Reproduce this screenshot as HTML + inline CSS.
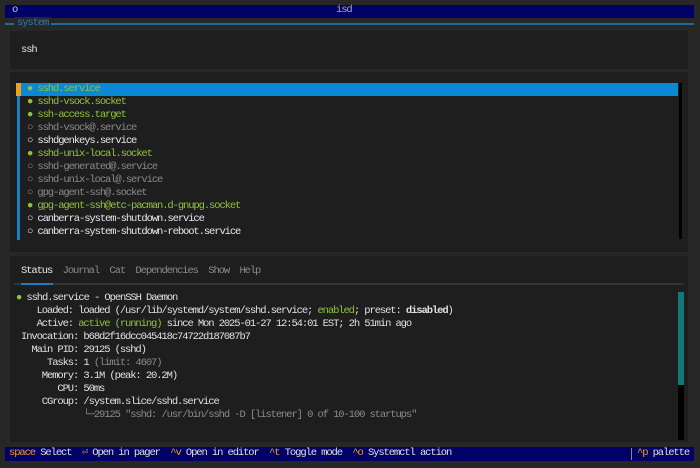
<!DOCTYPE html>
<html><head><style>
body{margin:0;width:700px;height:468px;background:#272727;overflow:hidden;position:relative;font-family:"Liberation Mono",monospace;font-size:10.5px;letter-spacing:-1.1px;color:#e0e0e0}
.a{position:absolute;white-space:pre;line-height:13px}
.g{color:#8fc43a}.d{color:#8a8a8a}.w{color:#e8e8e8}.y{color:#f0a020}
</style></head><body>
<div class="a" style="left:5px;top:5px;width:689px;height:13px;background:#000066"></div>
<div class="a" style="left:12px;top:4px;color:#ccc">o</div>
<div class="a" style="left:336px;top:4px;color:#aaa">isd</div>
<div class="a" style="left:5px;top:23px;width:689px;height:2px;background:#1c6e96"></div>
<div class="a" style="left:14px;top:17px;background:#272727;color:#2a7fa8;padding:0 3px">system</div>
<div class="a" style="left:10px;top:31px;width:678px;height:38px;background:#1e1e1e"></div>
<div class="a" style="left:21px;top:44px">ssh</div>
<div class="a" style="left:10px;top:72px;width:678px;height:180px;background:#1e1e1e"></div>
<div class="a" style="left:17px;top:84px;width:3px;height:156px;background:#1c7fc0"></div>
<div class="a" style="left:17px;top:83px;width:661px;height:13px;background:#0a88d4"></div>
<div class="a" style="left:16px;top:83px;width:5px;height:13px;background:#f0a020"></div>
<div class="a" style="left:679px;top:83px;width:3px;height:156px;background:#000"></div>
<div class="a g" style="left:27px;top:83px">● sshd.service
● sshd-vsock.socket
● ssh-access.target
<span class="d">○ sshd-vsock@.service</span>
<span class="w">○ sshdgenkeys.service</span>
● sshd-unix-local.socket
<span class="d">○ sshd-generated@.service
○ sshd-unix-local@.service
○ gpg-agent-ssh@.socket</span>
● gpg-agent-ssh@etc-pacman.d-gnupg.socket
<span class="w">○ canberra-system-shutdown.service
○ canberra-system-shutdown-reboot.service</span></div>
<div class="a" style="left:10px;top:256px;width:678px;height:186px;background:#1e1e1e"></div>
<div class="a d" style="left:21px;top:265px"><span class="w">Status</span>  Journal  Cat  Dependencies  Show  Help</div>
<div class="a" style="left:14px;top:283px;width:670px;height:2px;background:#333"></div>
<div class="a" style="left:21px;top:283px;width:32px;height:2px;background:#1c7fc0"></div>
<div class="a" style="left:678px;top:292px;width:6px;height:93px;background:#0f7a78"></div>
<div class="a" style="left:678px;top:385px;width:6px;height:55px;background:#000"></div>
<div class="a" style="left:16px;top:292px"><span class="g">●</span> sshd.service - OpenSSH Daemon</div>
<div class="a" style="left:21px;top:305px">   Loaded: loaded (/usr/lib/systemd/system/sshd.service; <span class="g">enabled</span>; preset: <b>disabled</b>)
   Active: <span class="g">active (running)</span> since Mon 2025-01-27 12:54:01 EST; 2h 51min ago
Invocation: b68d2f16dcc045418c74722d187087b7
  Main PID: 29125 (sshd)
     Tasks: 1 <span class="d">(limit: 4607)</span>
    Memory: 3.1M (peak: 20.2M)
       CPU: 50ms
    CGroup: /system.slice/sshd.service
            <span class="d">└─29125 "sshd: /usr/bin/sshd -D [listener] 0 of 10-100 startups"</span></div>
<div class="a" style="left:5px;top:447px;width:689px;height:14px;background:#000066"></div>
<div class="a" style="left:9px;top:447px"><span class="y">space</span> Select  <span class="y">⏎</span> Open in pager  <span class="y">^v</span> Open in editor  <span class="y">^t</span> Toggle mode  <span class="y">^o</span> Systemctl action</div>
<div class="a" style="left:631px;top:448px;width:1px;height:12px;background:#888"></div>
<div class="a" style="left:637px;top:447px"><span class="y">^p</span> palette</div>
</body></html>
